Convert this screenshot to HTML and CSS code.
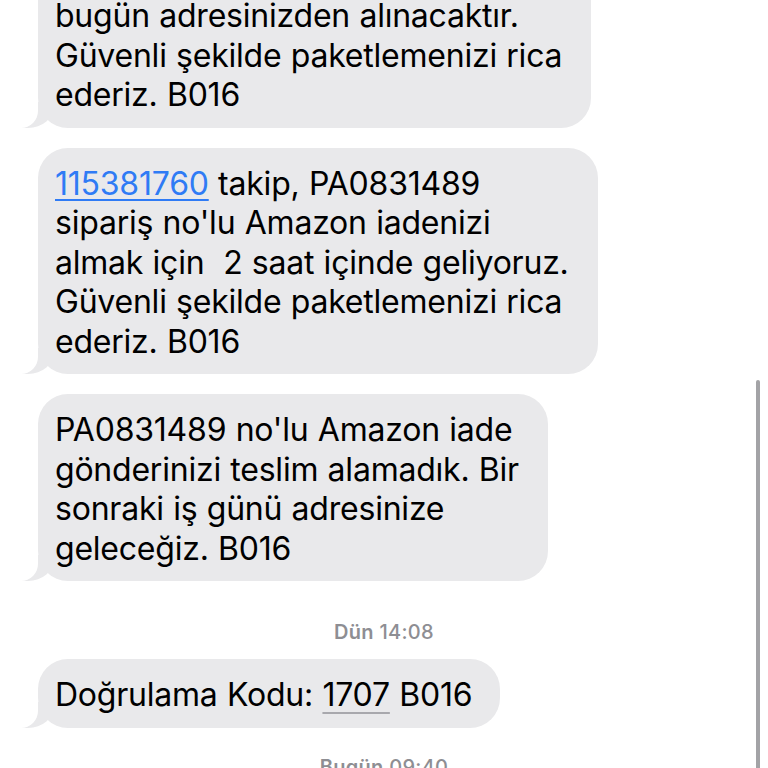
FILE: index.html
```html
<!DOCTYPE html>
<html lang="tr">
<head>
<meta charset="utf-8">
<title>Mesajlar</title>
<link rel="stylesheet" href="styles.css">
</head>
<body>
<div class="thread">
  <div class="row">
    <div class="bubble">115381760 takip, PA0831489<br>sipariş no'lu Amazon iadeniz<br>bugün adresinizden alınacaktır.<br>Güvenli şekilde paketlemenizi rica<br>ederiz. B016</div>
  </div>
  <div class="row">
    <div class="bubble"><span class="link">115381760</span> takip, PA0831489<br>sipariş no'lu Amazon iadenizi<br>almak için&nbsp; 2 saat içinde geliyoruz.<br>Güvenli şekilde paketlemenizi rica<br>ederiz. B016</div>
  </div>
  <div class="row">
    <div class="bubble">PA0831489 no'lu Amazon iade<br>gönderinizi teslim alamadık. Bir<br>sonraki iş günü adresinize<br>geleceğiz. B016</div>
  </div>
  <div class="stamp stamp-first"><span class="day">Dün</span> 14:08</div>
  <div class="row">
    <div class="bubble bubble-short">Doğrulama Kodu: <span class="code">1707</span> B016</div>
  </div>
  <div class="stamp stamp-last"><span class="day">Bugün</span> 09:40</div>
</div>
<div class="scrollbar"></div>
</body>
</html>
```

FILE: styles.css
```css
html, body {
  margin: 0;
  padding: 0;
  background: #ffffff;
  overflow: hidden;
}

body {
  width: 768px;
  height: 768px;
  position: relative;
  font-family: Inter, "Noto Sans", "Liberation Sans", sans-serif;
  color: #000;
}

.thread {
  display: flex;
  flex-direction: column;
  padding-left: 38px;
  margin-top: -99px;
}

.row {
  display: flex;
  margin-bottom: 20px;
}

.bubble {
  position: relative;
  background: #e9e9eb;
  border-radius: 30px;
  padding: 16px 29px 13px 17px;
  font-size: 32px;
  line-height: 39.5px;
  letter-spacing: -0.22px;
  word-spacing: 0.6px;
  white-space: nowrap;
}

.bubble::before {
  content: "";
  position: absolute;
  bottom: 0;
  left: -16px;
  width: 32px;
  height: 26px;
  background: #e9e9eb;
  border-bottom-right-radius: 26px 22px;
}

.bubble::after {
  content: "";
  position: absolute;
  bottom: 0;
  left: -40px;
  width: 40px;
  height: 28px;
  background: #ffffff;
  border-bottom-right-radius: 17px;
}

.bubble-short {
  padding-right: 28px;
}

.link {
  color: #2f7bf5;
  text-decoration: underline;
  text-decoration-thickness: 2px;
  text-underline-offset: 4px;
}

.code {
  text-decoration: underline;
  text-decoration-color: #a8a8ad;
  text-decoration-thickness: 1.5px;
  text-underline-offset: 6px;
}

.stamp {
  text-align: center;
  font-size: 20px;
  line-height: 24px;
  font-weight: 500;
  letter-spacing: 0.3px;
  color: #8e8e93;
  margin-right: 38px;
}

.stamp-first {
  margin-top: 19px;
  margin-bottom: 15px;
}

.stamp-last {
  margin-top: 7px;
}

.day {
  font-weight: 600;
}

.scrollbar {
  position: absolute;
  left: 756px;
  top: 380px;
  width: 4px;
  height: 400px;
  border-radius: 2px;
  background: #a3a3a6;
}
```
